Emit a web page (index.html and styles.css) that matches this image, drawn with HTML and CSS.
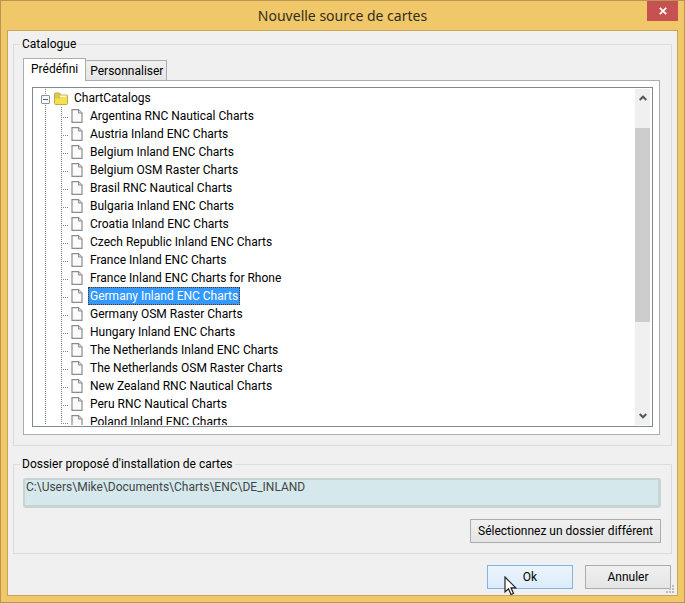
FILE: index.html
```html
<!DOCTYPE html>
<html lang="fr">
<head>
<meta charset="utf-8">
<title>Nouvelle source de cartes</title>
<link rel="stylesheet" href="styles.css">
</head>
<body>
<svg width="0" height="0" class="defs" aria-hidden="true">
  <symbol id="page" viewBox="0 0 12 14">
    <path d="M1 .7h6.500L11 4v9.300H1z" fill="#fbfbfb" stroke="#8c8c8c" stroke-width="1.200"/>
    <path d="M7.500.8V4H11" fill="#ddd" stroke="#8c8c8c"/>
  </symbol>
</svg>
<main class="window">
  <header class="titlebar">
    <h1>Nouvelle source de cartes</h1>
    <button class="close" type="button" aria-label="Fermer">
      <svg width="8" height="8" viewBox="0 0 8 8"><path d="M.8.8l6.400 6.400M7.200.8L.8 7.200" stroke="#fff" stroke-width="1.800"/></svg>
    </button>
  </header>
  <form class="client">
    <fieldset class="group catalogue">
      <legend>Catalogue</legend>
      <div class="tabs" role="tablist">
        <button class="tab active" type="button" role="tab" aria-selected="true">Prédéfini</button>
        <button class="tab" type="button" role="tab" aria-selected="false">Personnaliser</button>
      </div>
      <div class="panel" role="tabpanel">
        <div class="tree-box">
          <div class="tree">
            <div class="row root"><span class="toggle"></span>
              <svg class="folder" width="14" height="13" viewBox="0 0 14 13"><path d="M.5 2Q.5 1 1.500 1h4l1.500 2h5.500q1 0 1 1v7.500q0 1-1 1h-11q-1 0-1-1z" fill="#dcc550" stroke="#c0aa4c"/><path d="M6 3.500h6.500v1.500H6z" fill="#fffbe0"/><path d="M1 6.500h4.500L7 5h6v7H1z" fill="#f5e04e"/></svg>
              <span class="label">ChartCatalogs</span>
            </div>
            <ul>
              <li class="row"><svg class="page"><use href="#page"/></svg><span class="label">Argentina RNC Nautical Charts</span></li>
              <li class="row"><svg class="page"><use href="#page"/></svg><span class="label">Austria Inland ENC Charts</span></li>
              <li class="row"><svg class="page"><use href="#page"/></svg><span class="label">Belgium Inland ENC Charts</span></li>
              <li class="row"><svg class="page"><use href="#page"/></svg><span class="label">Belgium OSM Raster Charts</span></li>
              <li class="row"><svg class="page"><use href="#page"/></svg><span class="label">Brasil RNC Nautical Charts</span></li>
              <li class="row"><svg class="page"><use href="#page"/></svg><span class="label">Bulgaria Inland ENC Charts</span></li>
              <li class="row"><svg class="page"><use href="#page"/></svg><span class="label">Croatia Inland ENC Charts</span></li>
              <li class="row"><svg class="page"><use href="#page"/></svg><span class="label">Czech Republic Inland ENC Charts</span></li>
              <li class="row"><svg class="page"><use href="#page"/></svg><span class="label">France Inland ENC Charts</span></li>
              <li class="row"><svg class="page"><use href="#page"/></svg><span class="label">France Inland ENC Charts for Rhone</span></li>
              <li class="row"><svg class="page"><use href="#page"/></svg><span class="label selected">Germany Inland ENC Charts</span></li>
              <li class="row"><svg class="page"><use href="#page"/></svg><span class="label">Germany OSM Raster Charts</span></li>
              <li class="row"><svg class="page"><use href="#page"/></svg><span class="label">Hungary Inland ENC Charts</span></li>
              <li class="row"><svg class="page"><use href="#page"/></svg><span class="label">The Netherlands Inland ENC Charts</span></li>
              <li class="row"><svg class="page"><use href="#page"/></svg><span class="label">The Netherlands OSM Raster Charts</span></li>
              <li class="row"><svg class="page"><use href="#page"/></svg><span class="label">New Zealand RNC Nautical Charts</span></li>
              <li class="row"><svg class="page"><use href="#page"/></svg><span class="label">Peru RNC Nautical Charts</span></li>
              <li class="row"><svg class="page"><use href="#page"/></svg><span class="label">Poland Inland ENC Charts</span></li>
            </ul>
          </div>
          <div class="scrollbar" aria-hidden="true">
            <svg width="8" height="6" viewBox="0 0 8 6"><path d="M.7 5L4 1.700 7.300 5" fill="none" stroke="#555" stroke-width="2"/></svg>
            <div class="track"><div class="thumb"></div></div>
            <svg width="8" height="6" viewBox="0 0 8 6"><path d="M.7 1L4 4.300 7.300 1" fill="none" stroke="#555" stroke-width="2"/></svg>
          </div>
        </div>
      </div>
    </fieldset>
    <fieldset class="group folder-group">
      <legend><label for="path">Dossier proposé d'installation de cartes</label></legend>
      <input id="path" class="path" type="text" readonly value="C:\Users\Mike\Documents\Charts\ENC\DE_INLAND">
      <button class="btn" type="button">Sélectionnez un dossier différent</button>
    </fieldset>
    <footer class="actions">
      <div class="ok-wrap">
        <button class="btn ok" type="button">Ok</button>
        <svg class="cursor" width="13" height="20" viewBox="0 0 13 20" aria-hidden="true"><path d="M1 1v15l3.500-3.200 2.500 5.700 2.500-1.100L7 11.800h4.800z" fill="#fff" stroke="#222" stroke-width="1.200"/></svg>
      </div>
      <button class="btn" type="button">Annuler</button>
    </footer>
    <svg class="grip" width="8" height="8" viewBox="0 0 8 8" aria-hidden="true"><path d="M6 0h2v2H6zM3 3h2v2H3zM6 3h2v2H6zM0 6h2v2H0zM3 6h2v2H3zM6 6h2v2H6z" fill="#bbb"/></svg>
  </form>
</main>
</body>
</html>
```

FILE: styles.css
```css
* { box-sizing: border-box; }

body {
  margin: 0;
  font: 12px/16px Roboto, "Noto Sans", sans-serif;
  color: #000;
}

button, input { font: inherit; color: inherit; }

.defs { position: absolute; }

.window {
  display: flex;
  flex-direction: column;
  height: 100vh;
  min-height: 400px;
  padding: 0 6px 6px;
  background: #f0c869;
  border: 1px solid #b8964f;
}

.titlebar {
  display: grid;
  grid-template-columns: 31px 1fr 31px;
  height: 29px;
  flex: none;
}

.titlebar h1 {
  grid-column: 2;
  margin: 0;
  font-family: "Noto Sans", "Open Sans", sans-serif;
  font-size: 14px;
  font-weight: 400;
  line-height: 29px;
  text-align: center;
  color: #332d20;
}

.close {
  display: grid;
  place-items: center;
  height: 20px;
  padding: 0;
  border: 0;
  background: #c75050;
}

.client {
  position: relative;
  display: flex;
  flex: 1;
  flex-direction: column;
  min-height: 0;
  padding: 5px 5px 6px;
  background: #f0f0f0;
  border: 1px solid #c9a555;
}

.group {
  display: flex;
  flex-direction: column;
  min-width: 0;
  margin: 0;
  padding: 6px 10px 10px 9px;
  border: 1px solid #dcdcdc;
}

.group legend {
  margin-left: -3px;
  padding: 0 2px;
}

.catalogue { flex: 1; min-height: 0; }

.tabs {
  display: flex;
  align-items: flex-end;
  height: 22px;
}

.tab {
  height: 20px;
  padding: 0 3px 0 4px;
  border: 1px solid #acacac;
  border-width: 1px 1px 0 0;
  background: linear-gradient(#f0f0f0, #e5e5e5);
}

.tab.active {
  z-index: 1;
  height: 23px;
  margin-bottom: -1px;
  padding: 0 7px 2px;
  border-left-width: 1px;
  background: #fff;
}

.panel {
  display: flex;
  flex: 1;
  min-height: 0;
  margin-right: 1px;
  padding: 6px 6px 7px 8px;
  border: 1px solid #acacac;
  background: #fff;
}

.tree-box {
  display: flex;
  flex: 1;
  padding: 1px 2px 1px 0;
  border: 1px solid #828790;
}

.tree {
  flex: 1;
  overflow: hidden;
  padding-left: 8px;
  background: repeating-linear-gradient(#808080 0 1px, transparent 1px 2px) 12px 0 / 1px 100% no-repeat;
}

.tree ul {
  margin: 0 0 0 20px;
  padding: 0;
  list-style: none;
  background: repeating-linear-gradient(#808080 0 1px, transparent 1px 2px) 0 0 / 1px 100% no-repeat;
}

.row {
  display: flex;
  align-items: center;
  height: 18px;
}

.tree li {
  padding-left: 10px;
  background: repeating-linear-gradient(90deg, #808080 0 1px, transparent 1px 2px) 2px 10px / 6px 1px no-repeat;
}

.page { width: 12px; height: 14px; margin-right: 5px; }

.toggle {
  width: 9px;
  height: 9px;
  margin: 2px 4px 0 0;
  border: 1px solid #919191;
  border-radius: 1px;
  background: linear-gradient(#3c5a9c, #3c5a9c) center / 5px 1px no-repeat, #fafafa;
}

.folder { margin-right: 4px; }

.label {
  height: 18px;
  padding: 0 1px;
  border: 1px solid transparent;
  white-space: nowrap;
}

.selected {
  color: #fff;
  background: #3399ff;
  border: 1px dotted #5a3300;
}

.scrollbar {
  display: flex;
  flex-direction: column;
  align-items: center;
  width: 15px;
  padding: 6px 0;
  background: #f0f0f0;
}

.track { flex: 1; width: 100%; padding: 27px 0 91px; }

.thumb { height: 100%; background: #cdcdcd; }

.folder-group { margin-top: 10px; }

.path {
  width: 100%;
  height: 30px;
  margin-bottom: 11px;
  padding: 0 1px 12px;
  border: 2px solid #c8d3d4;
  border-width: 2px 3px 3px 2px;
  border-radius: 3px;
  background: #d5e9ed;
  color: #444;
}

.btn {
  min-width: 86px;
  height: 24px;
  padding: 0 7px;
  border: 1px solid #acacac;
  background: linear-gradient(#f0f0f0, #e5e5e5);
}

.folder-group .btn { align-self: flex-end; }

.actions {
  display: flex;
  justify-content: flex-end;
  gap: 12px;
  margin: 11px 1px 0 0;
}

.ok-wrap { position: relative; display: flex; }

.ok {
  border-color: #7eb4ea;
  background: linear-gradient(#ecf4fc, #dcecfc);
}

.cursor {
  position: absolute;
  left: 17px;
  top: 11px;
}

.grip {
  position: absolute;
  right: 3px;
  bottom: 2px;
}
```
